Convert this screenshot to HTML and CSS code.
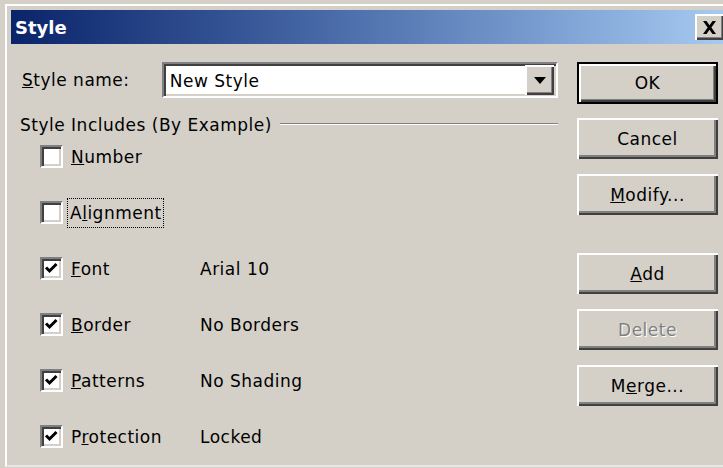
FILE: index.html
```html
<!DOCTYPE html>
<html>
<head>
<meta charset="utf-8">
<title>Style</title>
<link rel="stylesheet" href="styles.css">
</head>
<body>
<div class="window">
  <div class="titlebar">
    <span class="title">Style</span>
    <button class="close" aria-label="Close">
      <svg width="15" height="13" viewBox="0 0 15 13"><path d="M1 0h3.5l3 4.2 3-4.2H14L9.4 6.5 14 13h-3.5l-3-4.2-3 4.2H1l4.6-6.5z" fill="#000"/></svg>
    </button>
  </div>
  <div class="content">
    <div class="form">
      <div class="name-row">
        <label class="name-label"><u>S</u>tyle name:</label>
        <div class="combo">
          <span class="combo-text">New Style</span>
          <span class="combo-btn"><svg width="12" height="7" viewBox="0 0 12 7"><path d="M0 0h12L6 7z" fill="#000"/></svg></span>
        </div>
      </div>
      <div class="group-head">
        <span class="group-title">Style Includes (By Example)</span>
        <span class="group-line"></span>
      </div>
      <div class="options">
        <div class="opt"><span class="box"></span><span class="opt-label"><u>N</u>umber</span></div>
        <div class="opt"><span class="box"></span><span class="opt-label focus">A<u>l</u>ignment</span></div>
        <div class="opt"><span class="box checked"></span><span class="opt-label"><u>F</u>ont</span><span class="opt-value">Arial 10</span></div>
        <div class="opt"><span class="box checked"></span><span class="opt-label"><u>B</u>order</span><span class="opt-value">No Borders</span></div>
        <div class="opt"><span class="box checked"></span><span class="opt-label"><u>P</u>atterns</span><span class="opt-value">No Shading</span></div>
        <div class="opt"><span class="box checked"></span><span class="opt-label">P<u>r</u>otection</span><span class="opt-value">Locked</span></div>
      </div>
    </div>
    <div class="buttons">
      <button class="btn default">OK</button>
      <button class="btn">Cancel</button>
      <button class="btn"><u>M</u>odify...</button>
      <button class="btn spaced"><u>A</u>dd</button>
      <button class="btn disabled">Delete</button>
      <button class="btn">M<u>e</u>rge...</button>
    </div>
  </div>
</div>
</body>
</html>
```

FILE: styles.css
```css
html, body {
  margin: 0;
  padding: 0;
  background: #d4d0c8;
}

body {
  font-family: "DejaVu Sans", sans-serif;
  font-size: 17px;
  letter-spacing: 0.5px;
  color: #000;
  width: 723px;
  height: 468px;
  overflow: hidden;
}

.window {
  margin: 4px 0 0 5px;
  height: 463px;
  border-top: 2px solid #fff;
  border-left: 2px solid #fff;
  border-bottom: 2px solid #e8e6e2;
  padding: 4px 0 0 4px;
  box-sizing: border-box;
}

.titlebar {
  height: 34px;
  background: linear-gradient(to right, #0a246a 0%, #3a5a9a 35%, #6e92c8 68%, #a6caf0 100%);
  display: flex;
  align-items: center;
  justify-content: space-between;
  padding-left: 4px;
}

.title {
  color: #fff;
  font-weight: bold;
  font-size: 18px;
  letter-spacing: 0;
}

.close {
  width: 29px;
  height: 26px;
  padding: 0;
  margin-right: -1px;
  background: #d4d0c8;
  border: none;
  box-shadow: inset 2px 2px #fff, inset -2px -2px #404040, inset -3px -3px #808080;
  display: flex;
  align-items: center;
  justify-content: center;
}

.content {
  display: flex;
  padding-top: 18px;
}

.form {
  width: 540px;
  padding-left: 7px;
}

.name-row {
  display: flex;
  align-items: center;
  height: 36px;
}

.name-label {
  width: 140px;
  padding-left: 4px;
}

.combo {
  width: 397px;
  height: 36px;
  box-sizing: border-box;
  background: #fff;
  border: 2px solid;
  border-color: #808080 #fff #fff #808080;
  box-shadow: inset 2px 2px #404040, inset -2px -2px #d4d0c8;
  display: flex;
  align-items: center;
  justify-content: space-between;
  padding: 2px;
}

.combo-text {
  padding-left: 4px;
  padding-top: 2px;
}

.combo-btn {
  width: 29px;
  height: 30px;
  box-sizing: border-box;
  background: #d4d0c8;
  box-shadow: inset 2px 2px #fff, inset -2px -2px #404040, inset -3px -3px #808080;
  display: flex;
  align-items: center;
  justify-content: center;
}

.group-head {
  display: flex;
  align-items: center;
  margin-top: 19px;
  height: 16px;
  padding-left: 2px;
}

.group-line {
  flex: 1;
  height: 0;
  border-top: 1px solid #808080;
  border-bottom: 1px solid #fff;
  margin-left: 8px;
  margin-top: -3px;
}

.options {
  display: flex;
  flex-direction: column;
  gap: 33px;
  padding-top: 12px;
  padding-left: 22px;
}

.opt {
  display: flex;
  align-items: center;
  height: 23px;
}

.box {
  width: 23px;
  height: 23px;
  box-sizing: border-box;
  background: #fff;
  border: 2px solid;
  border-color: #808080 #fff #fff #808080;
  box-shadow: inset 2px 2px #404040, inset -2px -2px #d4d0c8;
  flex: none;
}

.box.checked {
  background: #fff url("data:image/svg+xml,%3Csvg xmlns='http://www.w3.org/2000/svg' width='19' height='19'%3E%3Cpath d='M4 8.5l3.5 3.5 7-7' stroke='%23000' stroke-width='3' fill='none'/%3E%3C/svg%3E") center / 19px 19px no-repeat;
}

.opt-label {
  margin-left: 8px;
  width: 121px;
  flex: none;
  box-sizing: border-box;
}

.opt-label.focus {
  width: auto;
  outline: 1px dotted #000;
  outline-offset: 0;
  padding: 4px 1px 4px 2px;
  margin-left: 5px;
}

.opt-value {
  margin-left: 8px;
}

.buttons {
  display: flex;
  flex-direction: column;
  gap: 15px;
  padding-left: 19px;
}

.btn {
  width: 141px;
  height: 41px;
  font-family: inherit;
  font-size: 17px;
  letter-spacing: 0.5px;
  color: #000;
  background: #d4d0c8;
  border: none;
  padding: 0;
  box-shadow: inset 2px 2px #fff, inset -2px -2px #404040, inset -4px -4px #808080;
}

.btn.default {
  height: 42px;
  box-shadow: inset 0 0 0 2px #000, inset 4px 4px #fff, inset -4px -4px #404040, inset -5px -5px #808080;
  margin-bottom: -1px;
}

.btn.spaced {
  margin-top: 23px;
}

.btn.disabled {
  color: #808080;
  text-shadow: 1px 1px #fff;
}
```
